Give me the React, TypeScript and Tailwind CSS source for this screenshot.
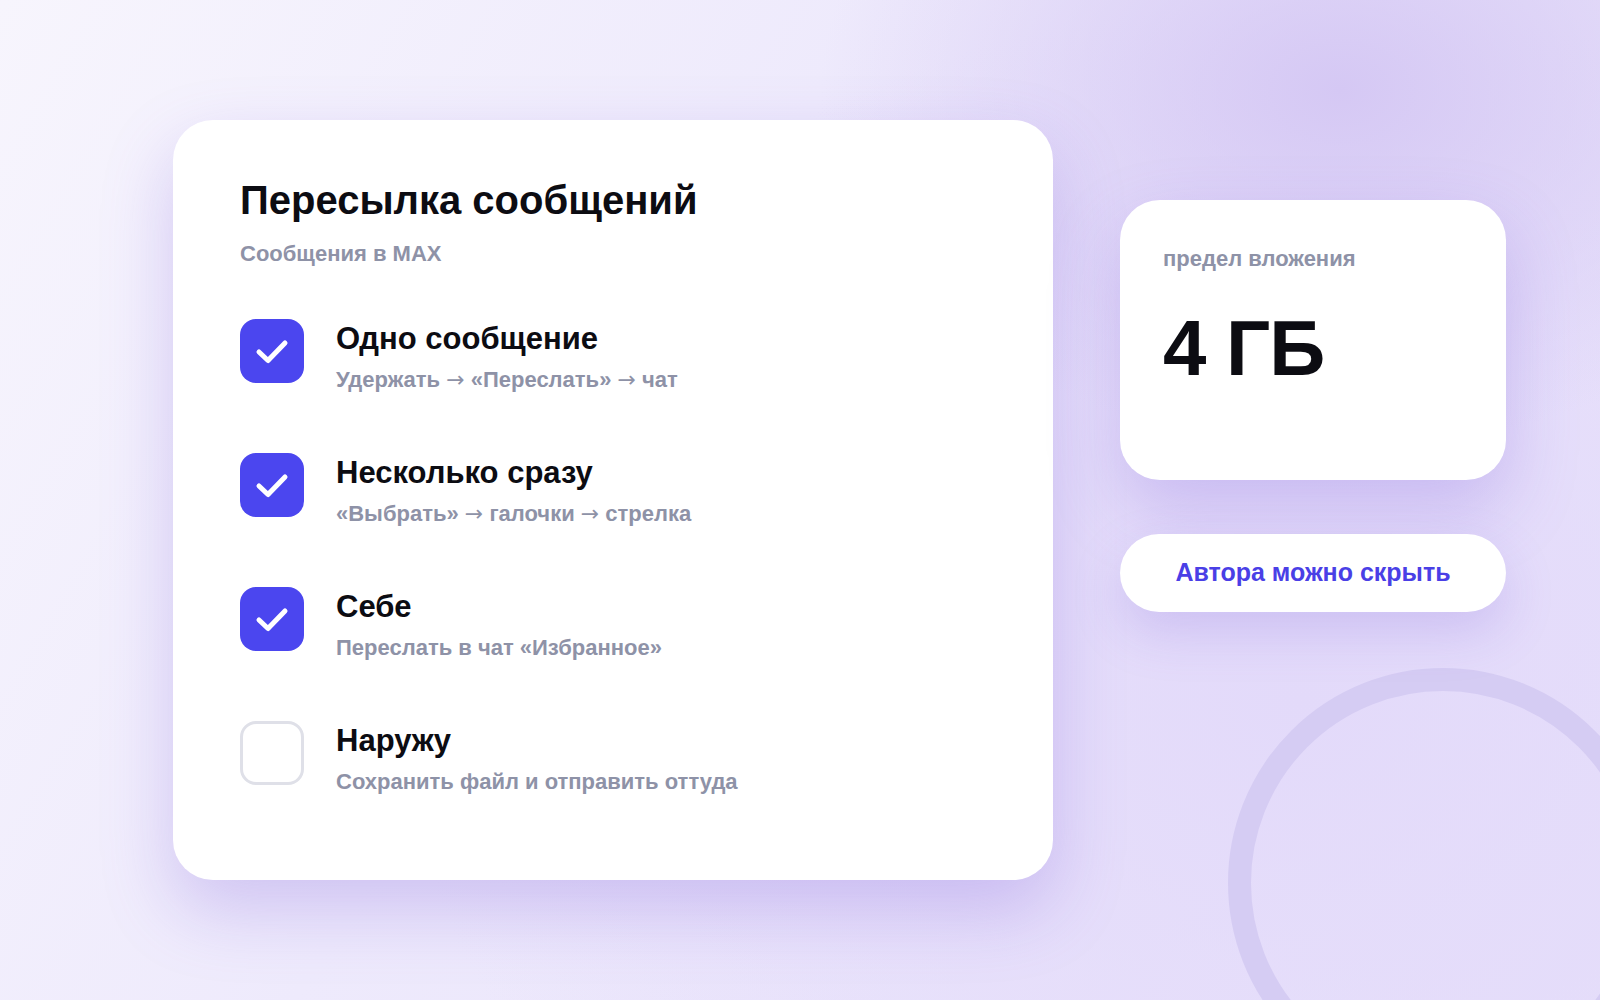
interface Option {
  title: string;
  hint: string;
  checked: boolean;
}

const options: Option[] = [
  { title: "Одно сообщение", hint: "Удержать → «Переслать» → чат", checked: true },
  { title: "Несколько сразу", hint: "«Выбрать» → галочки → стрелка", checked: true },
  { title: "Себе", hint: "Переслать в чат «Избранное»", checked: true },
  { title: "Наружу", hint: "Сохранить файл и отправить оттуда", checked: false },
];

const Check = ({ checked }: { checked: boolean }) =>
  checked ? (
    <div className="w-16 h-16 shrink-0 rounded-[16px] bg-[#4b46ef] flex items-center justify-center">
      <svg width="36" height="36" viewBox="0 0 36 36" fill="none">
        <path
          d="M5 19 L14 27.5 L31 10"
          stroke="white"
          strokeWidth="5"
          strokeLinecap="round"
          strokeLinejoin="round"
        />
      </svg>
    </div>
  ) : (
    <div className="w-16 h-16 shrink-0 rounded-[16px] border-[3px] border-[#dfe0e8] bg-white" />
  );

// the arrow glyph in Liberation is tiny, borrow a wider one
const Hint = ({ text }: { text: string }) => {
  const parts = text.split("→");
  return (
    <>
      {parts.map((p, i) => (
        <span key={i}>
          {p}
          {i < parts.length - 1 && (
            <span className="font-['DejaVu_Sans',sans-serif] font-normal">→</span>
          )}
        </span>
      ))}
    </>
  );
};

export default function App() {
  return (
    <div
      className="relative w-[1600px] h-[1000px] overflow-hidden font-['Liberation_Sans',Arial,sans-serif] bg-[radial-gradient(ellipse_520px_360px_at_1340px_90px,#d5c8f4_0%,rgba(213,200,244,0)_100%),radial-gradient(ellipse_900px_700px_at_1300px_700px,#e3dafa_0%,rgba(227,218,250,0)_100%),linear-gradient(120deg,#f7f5fd_0%,#eeeafc_40%,#e6dffa_100%)]"
    >
      {/* decorative ring */}
      <div className="absolute left-[1228px] top-[668px] w-[430px] h-[430px] rounded-full border-[23px] border-[#d5ccf3]" />

      <div className="relative flex items-start gap-[67px] pl-[173px] pt-[120px]">
        <section className="w-[880px] h-[760px] rounded-[40px] bg-white shadow-[0_30px_70px_rgba(125,95,220,0.28)] pl-[67px] pt-[56px]">
          <h1 className="text-[40px] leading-[48px] font-bold text-[#0c0c12]">
            Пересылка сообщений
          </h1>
          <p className="mt-[16px] text-[22px] leading-[28px] font-semibold text-[#8e92a7]">
            Сообщения в MAX
          </p>

          <ul className="mt-[51px] flex flex-col gap-[59px]">
            {options.map((o) => (
              <li key={o.title} className="flex items-start gap-[32px]">
                <Check checked={o.checked} />
                <div className="mt-[1px]">
                  <div className="text-[31px] leading-[38px] font-bold text-[#0c0c12]">
                    {o.title}
                  </div>
                  <div className="mt-[8px] text-[22px] leading-[28px] font-semibold text-[#8e92a7]">
                    <Hint text={o.hint} />
                  </div>
                </div>
              </li>
            ))}
          </ul>
        </section>

        <div className="pt-[80px] flex flex-col gap-[54px] w-[386px]">
          <div className="h-[280px] rounded-[40px] bg-white shadow-[0_30px_70px_rgba(125,95,220,0.28)] pl-[43px] pt-[45px]">
            <div className="text-[22px] leading-[28px] font-semibold text-[#8e92a7]">
              предел вложения
            </div>
            <div className="mt-[35px] text-[78px] leading-[80px] font-bold text-[#0c0c12] tracking-[-1px]">
              4 ГБ
            </div>
          </div>
          <div className="h-[78px] rounded-full bg-white shadow-[0_20px_50px_rgba(125,95,220,0.22)] flex items-center justify-center">
            <span className="text-[25px] font-bold text-[#4a3fe6]">Автора можно скрыть</span>
          </div>
        </div>
      </div>
    </div>
  );
}
